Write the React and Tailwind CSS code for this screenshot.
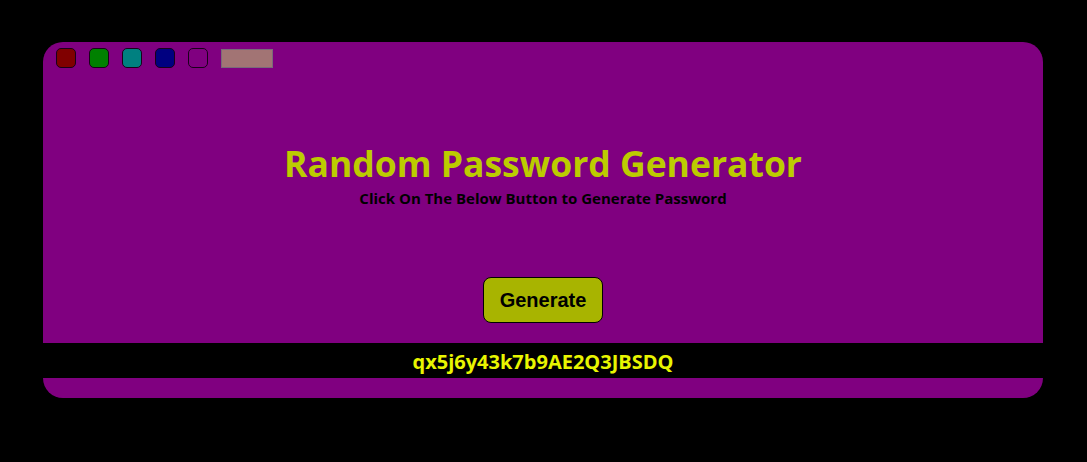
import React, { useState } from "react";

const swatches = ["#800000", "#008000", "#008080", "#000080", "#800080"];

function makePassword() {
    const chars = "abcdefghijklmnopqrstuvwxyzABCDEFGHIJKLMNOPQRSTUVWXYZ0123456789";
    let out = "";
    for (let i = 0; i < 22; i++) out += chars[Math.floor(Math.random() * chars.length)];
    return out;
}

export default function App() {
    const [bg, setBg] = useState("#800080");
    const [password, setPassword] = useState("qx5j6y43k7b9AE2Q3JBSDQ");

    return (
        <div className="min-h-[462px] w-full bg-black pt-[42px] pl-[43px]" style={{ fontFamily: '"Open Sans", "Noto Sans", sans-serif' }}>
            <div className="w-[1000px] h-[356px] rounded-[20px] overflow-hidden flex flex-col" style={{ backgroundColor: bg }}>
                {/* Theme swatches */}
                <div className="flex items-center gap-[13px] pl-[13px] pt-[6px] h-[26px]">
                    {swatches.map((c) => (
                        <button
                            key={c}
                            onClick={() => setBg(c)}
                            className="w-[20px] h-[20px] rounded-[5px] border border-[#1a001a]"
                            style={{ backgroundColor: c }}
                        />
                    ))}
                    <div className="w-[52px] h-[19px] bg-[#a27474] border border-[#7a6a7a]" />
                </div>

                <h1 className="mt-[73px] h-[44px] leading-[44px] text-center text-[35.5px] font-bold text-[#bccc00]">
                    Random Password Generator
                </h1>
                <p className="mt-[3px] h-[20px] leading-[20px] text-center text-[15px] font-bold text-black">
                    Click On The Below Button to Generate Password
                </p>

                <div className="mt-[69px] flex justify-center">
                    <button
                        onClick={() => setPassword(makePassword())}
                        className="w-[120px] h-[46px] rounded-[8px] border border-black bg-[#a8b400] text-black text-[20px] font-bold"
                        style={{ fontFamily: '"Liberation Sans", Arial, sans-serif' }}
                    >
                        Generate
                    </button>
                </div>

                <div className="mt-[20px] h-[35px] bg-black flex items-center justify-center pt-[3px]">
                    <span className="text-[20px] leading-[28px] font-bold text-[#e8f500]">{password}</span>
                </div>
            </div>
        </div>
    );
}
